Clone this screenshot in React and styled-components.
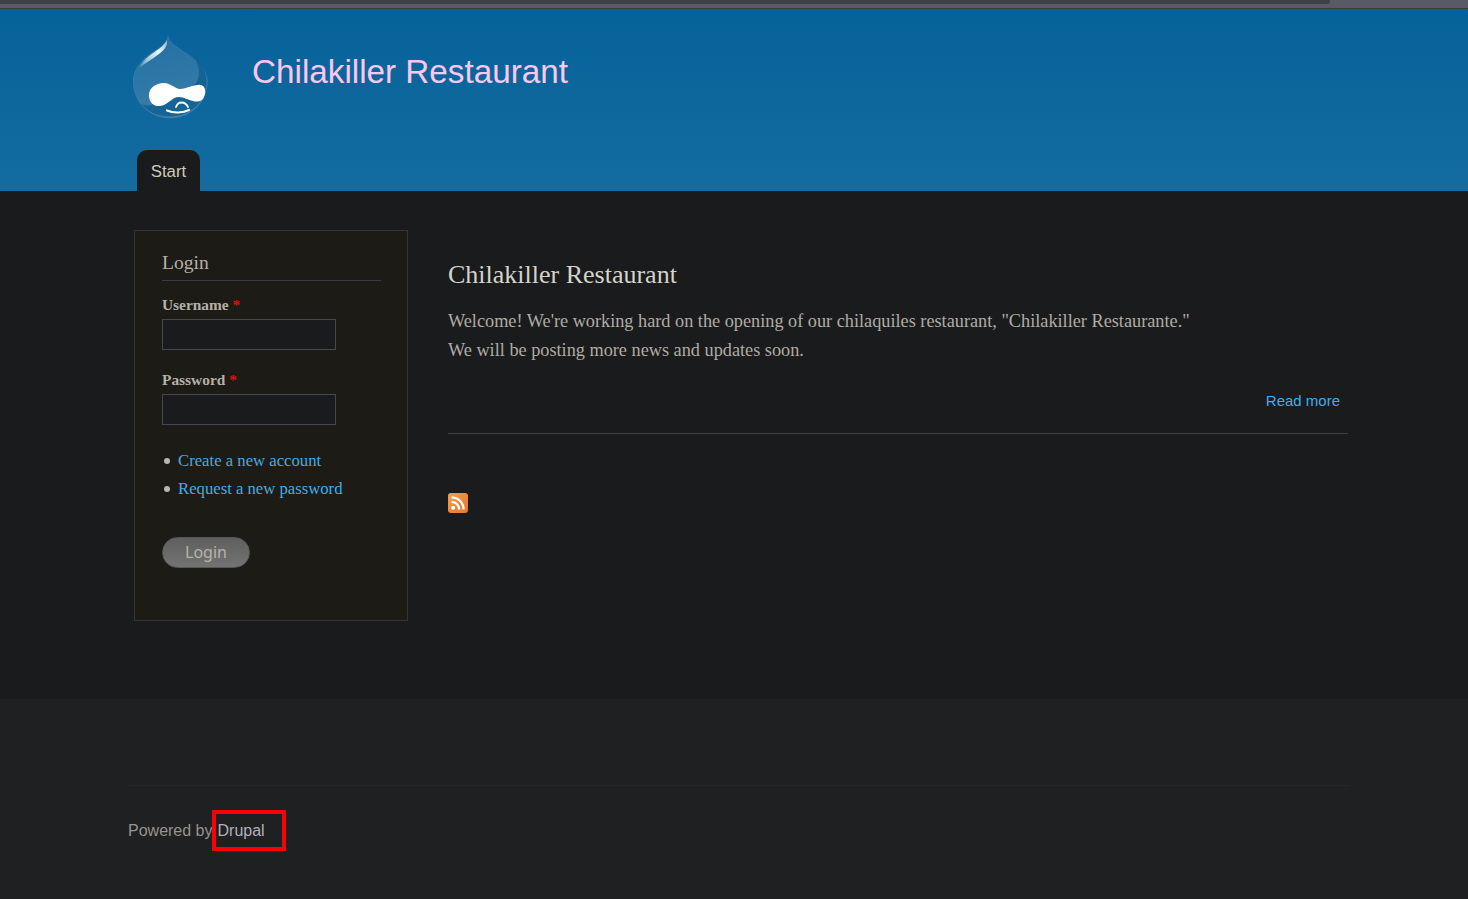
import styled, { createGlobalStyle } from "styled-components";

const GlobalStyle = createGlobalStyle`
  html, body {
    margin: 0;
    padding: 0;
    background: #1f2022;
  }
  * {
    box-sizing: border-box;
  }
  a {
    text-decoration: none;
  }
`;

const DROP_PATH =
  "M35 0.5 C36 8 44 12 51 17 C65 26 74.3 35 74.3 46 C74.3 68 57 83 37 83 C17 83 0.3 68 0.3 46 C0.3 34 9 24 20 17 C27 13 34 8 35 0.5 Z";

const DropLogo = () => (
  <svg width="76" height="84" viewBox="0 0 76 84">
    <defs>
      <linearGradient id="drop" x1="0.35" y1="0" x2="0.55" y2="1">
        <stop offset="0%" stopColor="#2471a3" />
        <stop offset="60%" stopColor="#2f79a7" />
        <stop offset="100%" stopColor="#3f80a8" />
      </linearGradient>
      <linearGradient id="shine" x1="1" y1="0" x2="0" y2="1">
        <stop offset="0%" stopColor="#7fb0cf" />
        <stop offset="35%" stopColor="#f2f7fa" />
        <stop offset="70%" stopColor="#a9cadf" />
        <stop offset="100%" stopColor="#3f86b3" />
      </linearGradient>
    </defs>
    <path d={DROP_PATH} fill="url(#drop)" stroke="#6d9cbb" strokeOpacity="0.25" strokeWidth="1" />
    <path
      d="M58 18 C68 27 73.5 36 73.5 46 C73.5 67 57 81.5 37 81.5 C25 81.5 15 77 8 69 C16 72 22 70 30 66 L46 58 C56 56 66 50 66 38 C66 30 63 24 58 18 Z"
      fill="#115f92"
      opacity="0.85"
    />
    <path
      d="M34 5 C31 11 23 16 16 21 C11 25 8 29 6 33 C12 28 20 24 26 19 C31 15 35 11 34 5 Z"
      fill="url(#shine)"
    />
    <path
      d="M16 60 C16 52 24 48 31 48 C38 48 42 54 47 54 C54 54 62 49 68 50 C73 51 73 58 71 62 C69 67 64 67 60 66 C55 65 51 62 46 62 C40 62 37 67 31 70 C24 73 16 70 16 60 Z"
      fill="#ffffff"
    />
    <path
      d="M43 72 C45 66 52 66 55 72"
      fill="none"
      stroke="#ffffff"
      strokeWidth="1.8"
      strokeLinecap="round"
    />
    <path
      d="M34 75.5 C41 78.5 50 78 56 75"
      fill="none"
      stroke="#ffffff"
      strokeWidth="2.2"
      strokeLinecap="round"
    />
  </svg>
);

const RssIcon = () => (
  <svg width="20" height="20" viewBox="0 0 20 20">
    <defs>
      <linearGradient id="rss" x1="0" y1="0" x2="1" y2="1">
        <stop offset="0%" stopColor="#f6a04d" />
        <stop offset="100%" stopColor="#e8742a" />
      </linearGradient>
    </defs>
    <rect width="20" height="20" rx="3" fill="url(#rss)" />
    <circle cx="5.2" cy="14.8" r="2" fill="#fff" />
    <path
      d="M3.5 8.8 A7.7 7.7 0 0 1 11.2 16.5"
      fill="none"
      stroke="#fff"
      strokeWidth="2.3"
    />
    <path
      d="M3.5 4.4 A12.1 12.1 0 0 1 15.6 16.5"
      fill="none"
      stroke="#fff"
      strokeWidth="2.3"
    />
  </svg>
);

const App = () => {
  return (
    <>
      <GlobalStyle />
      <ScrollTrack>
        <ScrollThumb />
      </ScrollTrack>
      <Header>
        <Branding>
          <LogoLink href="#">
            <DropLogo />
          </LogoLink>
          <SiteName href="#">Chilakiller Restaurant</SiteName>
        </Branding>
        <Tabs>
          <Tab href="#">Start</Tab>
        </Tabs>
      </Header>
      <Main>
        <Sidebar>
          <BlockTitle>Login</BlockTitle>
          <Field>
            <FieldLabel htmlFor="name">
              Username <Required>*</Required>
            </FieldLabel>
            <TextInput id="name" type="text" />
          </Field>
          <Field>
            <FieldLabel htmlFor="pass">
              Password <Required>*</Required>
            </FieldLabel>
            <TextInput id="pass" type="password" />
          </Field>
          <LinkList>
            <LinkItem>
              <BlueLink href="#">Create a new account</BlueLink>
            </LinkItem>
            <LinkItem>
              <BlueLink href="#">Request a new password</BlueLink>
            </LinkItem>
          </LinkList>
          <LoginButton type="button">Login</LoginButton>
        </Sidebar>
        <Content>
          <Article>
            <ArticleTitle>Chilakiller Restaurant</ArticleTitle>
            <ArticleBody>
              Welcome! We're working hard on the opening of our chilaquiles
              restaurant, "Chilakiller Restaurante."
              <br />
              We will be posting more news and updates soon.
            </ArticleBody>
            <ReadMore>
              <ReadMoreLink href="#">Read more</ReadMoreLink>
            </ReadMore>
          </Article>
          <FeedLink href="#">
            <RssIcon />
          </FeedLink>
        </Content>
      </Main>
      <Footer>
        <FooterRule />
        <Powered>
          Powered by
          <DrupalMark>
            <DrupalLink href="#">Drupal</DrupalLink>
          </DrupalMark>
        </Powered>
      </Footer>
    </>
  );
};
export default App;

const ScrollTrack = styled.div`
  height: 9px;
  background: #5a5a66;
  border-bottom: 1px solid #3a3a44;
`;

const ScrollThumb = styled.div`
  width: 1330px;
  height: 4px;
  background: #3f4147;
  border-bottom-right-radius: 3px;
`;

const Header = styled.header`
  height: 182px;
  padding-left: 133px;
  background: linear-gradient(#056299, #146ca1);
  display: flex;
  flex-direction: column;
  font-family: "Liberation Sans", Arial, sans-serif;
`;

const Branding = styled.div`
  height: 141px;
  display: flex;
  align-items: flex-start;
`;

const LogoLink = styled.a`
  display: block;
  width: 119px;
  height: 84px;
  margin-top: 26px;
`;

const SiteName = styled.a`
  margin-top: 43px;
  font-size: 33.25px;
  line-height: 40px;
  color: #fcc6f0;
`;

const Tabs = styled.nav`
  padding-left: 4px;
  display: flex;
`;

const Tab = styled.a`
  width: 63px;
  height: 41px;
  padding-top: 12px;
  text-align: center;
  font-size: 16.8px;
  line-height: 20px;
  color: #cfc9bc;
  background: #1a1b1d;
  border-radius: 10px 10px 0 0;
`;

const Main = styled.main`
  height: 508px;
  padding: 39px 120px 0 134px;
  background: #1a1b1d;
  display: flex;
  align-items: flex-start;
  gap: 40px;
  font-family: "Liberation Serif", "Times New Roman", serif;
`;

const Sidebar = styled.aside`
  width: 274px;
  height: 391px;
  padding: 20px 26px 0 27px;
  flex: none;
  background: #1c1b16;
  border: 1px solid #33353a;
`;

const BlockTitle = styled.h2`
  margin: 0 0 15px;
  padding-bottom: 6px;
  font-size: 19.6px;
  line-height: 23px;
  font-weight: normal;
  color: #b5b1a6;
  border-bottom: 1px solid #3a3c40;
`;

const Field = styled.div`
  margin-bottom: 21px;
`;

const FieldLabel = styled.label`
  display: block;
  margin-bottom: 5px;
  font-size: 15.4px;
  line-height: 18px;
  font-weight: bold;
  color: #b5b1a6;
`;

const Required = styled.span`
  color: #e01010;
`;

const TextInput = styled.input`
  display: block;
  width: 174px;
  height: 31px;
  background: #1a1b1d;
  border: 1px solid #45474b;
  outline: none;
`;

const LinkList = styled.ul`
  margin: 0 0 34px;
  padding: 1px 0 0;
  list-style: none;
  font-size: 16.7px;
  line-height: 28px;
`;

const LinkItem = styled.li`
  display: flex;
  align-items: center;
  gap: 8px;
  padding-left: 2px;

  &::before {
    content: "";
    width: 6px;
    height: 6px;
    border-radius: 50%;
    background: #b9b8ae;
  }
`;

const BlueLink = styled.a`
  color: #42ace8;
`;

const LoginButton = styled.button`
  display: block;
  width: 88px;
  height: 31px;
  padding: 0 0 2px;
  font-family: "Noto Sans", "Open Sans", sans-serif;
  font-size: 16px;
  color: #b8b4aa;
  background: linear-gradient(#5f5f5f, #737373);
  border: 1px solid #55575a;
  border-radius: 16px;
`;

const Content = styled.div`
  width: 900px;
  flex: none;
  padding-top: 28px;
`;

const Article = styled.article`
  height: 176px;
  border-bottom: 1px solid #3f4144;
`;

const ArticleTitle = styled.h2`
  margin: 0 0 15px;
  font-size: 26px;
  line-height: 34px;
  font-weight: normal;
  color: #d6d3ca;
`;

const ArticleBody = styled.p`
  margin: 0;
  font-size: 18.25px;
  line-height: 29px;
  color: #b0aca3;
`;

const ReadMore = styled.div`
  margin-top: 26px;
  padding-right: 8px;
  text-align: right;
  font-family: "Liberation Sans", Arial, sans-serif;
  font-size: 15px;
  line-height: 20px;
`;

const ReadMoreLink = styled.a`
  color: #42ace8;
`;

const FeedLink = styled.a`
  display: block;
  width: 20px;
  height: 20px;
  margin-top: 59px;
`;

const Footer = styled.footer`
  height: 200px;
  padding: 86px 118px 0 128px;
  background: #1f2022;
  font-family: "Liberation Sans", Arial, sans-serif;
`;

const FooterRule = styled.div`
  height: 1px;
  background: #25262a;
`;

const Powered = styled.p`
  margin: 24px 0 0;
  display: flex;
  align-items: center;
  font-size: 16px;
  line-height: 40px;
  color: #96948e;
`;

const DrupalMark = styled.span`
  display: flex;
  align-items: center;
  height: 41px;
  width: 74px;
  margin-left: -1px;
  padding-left: 2px;
  border: 4px solid #fb0007;
`;

const DrupalLink = styled.a`
  color: #b0b2b9;
`;
